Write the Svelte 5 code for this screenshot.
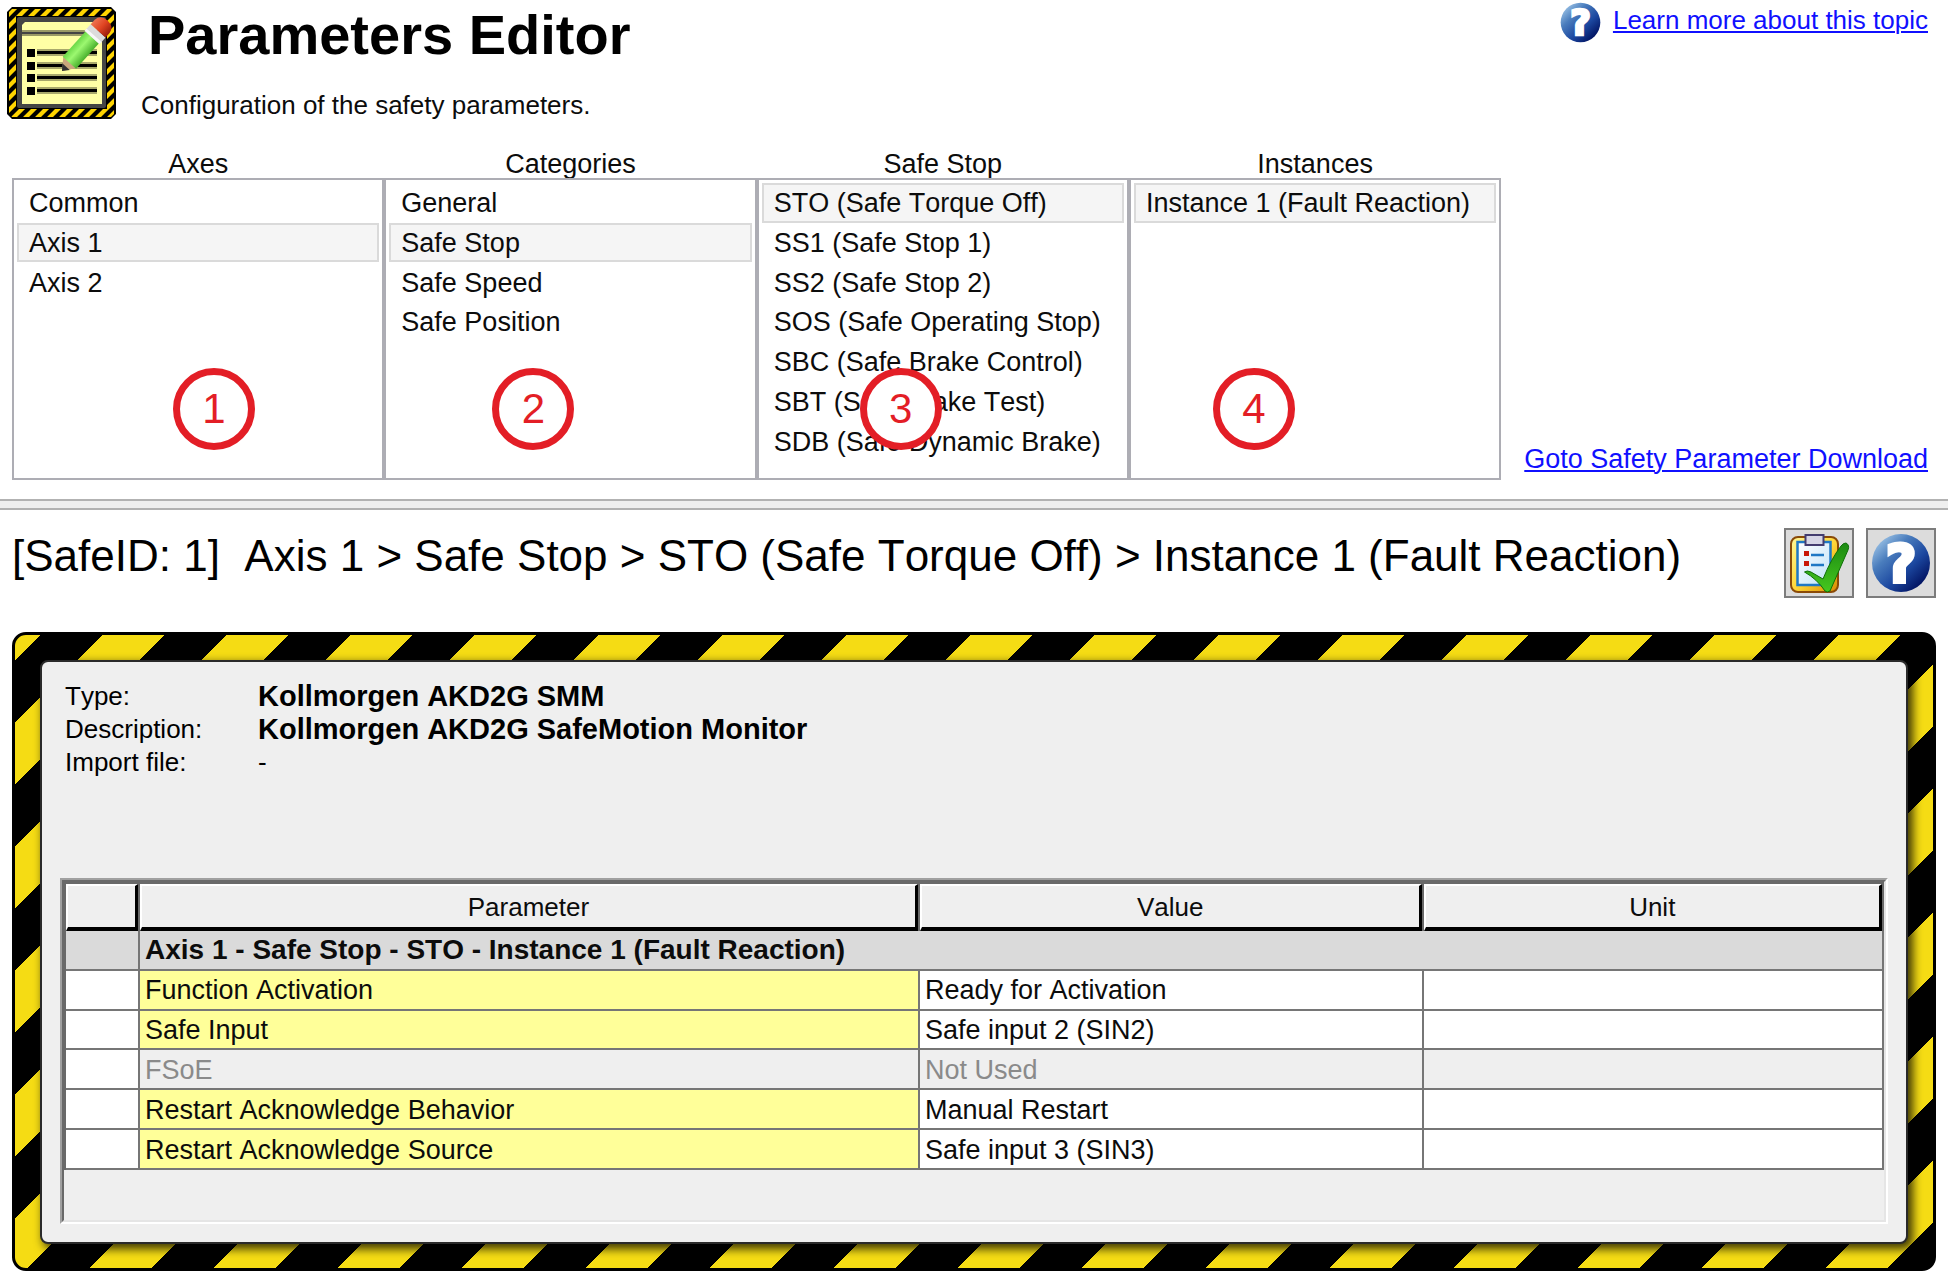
<script lang="ts">
	interface PickerColumn {
		title: string;
		items: string[];
		selected: number;
		marker: number;
	}

	let columns: PickerColumn[] = [
		{ title: 'Axes', items: ['Common', 'Axis 1', 'Axis 2'], selected: 1, marker: 159 },
		{
			title: 'Categories',
			items: ['General', 'Safe Stop', 'Safe Speed', 'Safe Position'],
			selected: 1,
			marker: 106
		},
		{
			title: 'Safe Stop',
			items: [
				'STO (Safe Torque Off)',
				'SS1 (Safe Stop 1)',
				'SS2 (Safe Stop 2)',
				'SOS (Safe Operating Stop)',
				'SBC (Safe Brake Control)',
				'SBT (Safe Brake Test)',
				'SDB (Safe Dynamic Brake)'
			],
			selected: 0,
			marker: 101
		},
		{ title: 'Instances', items: ['Instance 1 (Fault Reaction)'], selected: 0, marker: 82 }
	];

	const parameters = [
		{ name: 'Function Activation', value: 'Ready for Activation', unit: '', disabled: false },
		{ name: 'Safe Input', value: 'Safe input 2 (SIN2)', unit: '', disabled: false },
		{ name: 'FSoE', value: 'Not Used', unit: '', disabled: true },
		{ name: 'Restart Acknowledge Behavior', value: 'Manual Restart', unit: '', disabled: false },
		{ name: 'Restart Acknowledge Source', value: 'Safe input 3 (SIN3)', unit: '', disabled: false }
	];

	const bulletRows = [42, 55, 67, 80];

	function select(column: number, item: number) {
		columns[column].selected = item;
	}
</script>

{#snippet helpIcon(id: string)}
	<svg viewBox="0 0 60 60" aria-hidden="true">
		<defs>
			<linearGradient {id} x1="0.1" y1="0.1" x2="0.85" y2="0.9">
				<stop offset="0" stop-color="#9cc3e6" />
				<stop offset="0.3" stop-color="#4a7dbd" />
				<stop offset="0.65" stop-color="#1c48a0" />
				<stop offset="1" stop-color="#00105e" />
			</linearGradient>
		</defs>
		<circle cx="30" cy="30" r="29" fill="url(#{id})" />
		<text class="question" x="30" y="49" text-anchor="middle">?</text>
	</svg>
{/snippet}

<div class="page">
	<header>
		<svg class="logo" viewBox="0 0 109 112" aria-hidden="true">
			<defs>
				<pattern id="tape" width="12" height="12" patternUnits="userSpaceOnUse">
					<rect width="12" height="12" fill="#000" />
					<path d="M0 6 L6 0 H12 L0 12 Z M12 6 V12 H6 Z" fill="#ffd400" />
				</pattern>
				<linearGradient id="pencil" x1="0" y1="0" x2="0" y2="1">
					<stop offset="0" stop-color="#6cd848" />
					<stop offset="0.4" stop-color="#9cf870" />
					<stop offset="1" stop-color="#48b02c" />
				</linearGradient>
				<linearGradient id="eraser" x1="0" y1="0" x2="0" y2="1">
					<stop offset="0" stop-color="#ee7350" />
					<stop offset="0.5" stop-color="#e04422" />
					<stop offset="1" stop-color="#991c0c" />
				</linearGradient>
			</defs>
			<path d="M5 0 H104 L109 5 V107 L104 112 H5 L0 107 V5 Z" fill="#000" />
			<path d="M5 2 H104 L107 5 V107 L104 110 H5 L2 107 V5 Z" fill="url(#tape)" />
			<rect x="9" y="9" width="91" height="93" fill="#000" />
			<rect x="10" y="10" width="89" height="91" rx="2" fill="#454545" />
			<path d="M18 15 H95 V97 H15 V18 Z" fill="#ffffa5" />
			<rect x="15" y="23" width="80" height="6" fill="#9a9a66" />
			<rect x="15" y="25" width="80" height="2" fill="#444" />
			{#each bulletRows as y}
				<rect x="20" {y} width="8" height="8" fill="#000" />
				<rect x="30" {y} width="60" height="7" fill="#a8a86c" />
				<rect x="30" y={y + 2} width="60" height="3" fill="#000" />
			{/each}
			<g transform="translate(55 64) rotate(-48)">
				<path d="M0 0 L12 -9 V9 Z" fill="#c9a77c" />
				<path d="M0 0 L6 -5 V5 Z" fill="#333" />
				<rect x="11" y="-9" width="35" height="18" fill="url(#pencil)" />
				<rect x="45" y="-10" width="9" height="20" fill="#dcdcdc" />
				<rect x="45" y="-10" width="3" height="20" fill="#f8f8f8" />
				<path d="M54 -10 H60 Q68 -9 68 0 Q68 9 60 10 H54 Z" fill="url(#eraser)" />
			</g>
		</svg>
		<div class="heading">
			<h1>Parameters Editor</h1>
			<p>Configuration of the safety parameters.</p>
		</div>
		<div class="topic">
			{@render helpIcon('ball-small')}
			<a href="#help">Learn more about this topic</a>
		</div>
	</header>

	<section class="picker">
		<div class="columns">
			{#each columns as column, c}
				<div class="column">
					<h2>{column.title}</h2>
					<div class="box">
						<ul>
							{#each column.items as item, i}
								<li>
									<button
										type="button"
										class:selected={column.selected === i}
										on:click={() => select(c, i)}>{item}</button
									>
								</li>
							{/each}
						</ul>
						<span class="marker" style="left: {column.marker}px">{c + 1}</span>
					</div>
				</div>
			{/each}
		</div>
		<a href="#download">Goto Safety Parameter Download</a>
	</section>

	<div class="splitter"></div>

	<section class="title-row">
		<h2>
			[SafeID: 1]&nbsp; Axis 1 &gt; Safe Stop &gt; STO (Safe Torque Off) &gt; Instance 1 (Fault
			Reaction)
		</h2>
		<div class="tools">
			<button type="button" aria-label="Validate parameters">
				<svg viewBox="0 0 60 60" aria-hidden="true">
					<defs>
						<linearGradient id="board" x1="0" y1="0" x2="1" y2="1">
							<stop offset="0" stop-color="#fff79a" />
							<stop offset="0.5" stop-color="#ffd83a" />
							<stop offset="1" stop-color="#d98a00" />
						</linearGradient>
						<linearGradient id="sheet" x1="0" y1="0" x2="1" y2="1">
							<stop offset="0" stop-color="#ffffff" />
							<stop offset="1" stop-color="#bfe2f8" />
						</linearGradient>
						<linearGradient id="tick" x1="0" y1="0" x2="0" y2="1">
							<stop offset="0" stop-color="#1c8a12" />
							<stop offset="1" stop-color="#46c81e" />
						</linearGradient>
					</defs>
					<rect x="2" y="4" width="47" height="55" rx="7" fill="url(#board)" stroke="#8a4a08" stroke-width="2" />
					<rect x="8.5" y="9" width="33" height="43" fill="url(#sheet)" stroke="#1f78c4" stroke-width="2.5" />
					<rect x="16.5" y="2" width="18" height="10" fill="#d6d6e6" stroke="#433d70" stroke-width="2" />
					<rect x="15" y="18" width="5" height="5" fill="#c81808" />
					<rect x="15" y="28" width="5" height="5" fill="#c81808" />
					<path d="M22 22 H35 M22 32 H35" stroke="#1f78c4" stroke-width="2.5" />
					<path
						d="M15.5 39 Q18 37 22 39 L34 46 Q42 26 52 13 Q54 10 57 10 Q61 12 59 17 L41 58 Q38 60 36 58 Q28 46 15.5 39 Z"
						fill="url(#tick)"
						stroke="#0e7008"
						stroke-width="1"
					/>
				</svg>
			</button>
			<button type="button" aria-label="Help">
				{@render helpIcon('ball-large')}
			</button>
		</div>
	</section>

	<section class="hazard">
		<div class="panel">
			<dl>
				<dt>Type:</dt>
				<dd>Kollmorgen AKD2G SMM</dd>
				<dt>Description:</dt>
				<dd>Kollmorgen AKD2G SafeMotion Monitor</dd>
				<dt>Import file:</dt>
				<dd class="empty">-</dd>
			</dl>

			<div class="grid-outer">
				<div class="grid-inner">
					<table>
						<colgroup>
							<col class="col-mark" />
							<col class="col-name" />
							<col class="col-value" />
							<col />
						</colgroup>
						<thead>
							<tr>
								<th><div class="head"></div></th>
								<th><div class="head">Parameter</div></th>
								<th><div class="head">Value</div></th>
								<th><div class="head">Unit</div></th>
							</tr>
						</thead>
						<tbody>
							<tr class="group">
								<td></td>
								<td colspan="3">Axis 1 - Safe Stop - STO - Instance 1 (Fault Reaction)</td>
							</tr>
							{#each parameters as parameter}
								<tr class:disabled={parameter.disabled}>
									<td></td>
									<td class="name">{parameter.name}</td>
									<td>{parameter.value}</td>
									<td>{parameter.unit}</td>
								</tr>
							{/each}
						</tbody>
					</table>
				</div>
			</div>
		</div>
	</section>
</div>

<style>
	:global(body) {
		background: #fff;
	}

	.page {
		font-family: 'Liberation Sans', Arial, sans-serif;
		font-size: 27px;
		font-kerning: none;
		color: #0c0c0c;
		padding-bottom: 12px;
	}

	h1,
	h2,
	p,
	ul,
	dl,
	dd {
		margin: 0;
		padding: 0;
	}

	svg {
		display: block;
		overflow: visible;
	}

	a {
		color: #1010ff;
		line-height: 32px;
		white-space: nowrap;
		text-decoration-thickness: 2px;
		text-underline-offset: 2px;
	}

	header {
		display: flex;
		align-items: flex-start;
		padding-right: 20px;
	}

	.logo {
		width: 109px;
		height: 112px;
		margin: 7px 25px 0 7px;
	}

	.heading {
		flex: 1;
		padding-top: 7px;
	}

	h1 {
		padding-left: 7px;
		font-size: 56px;
		line-height: 56px;
		color: #000;
	}

	.heading p {
		margin-top: 26px;
		font-size: 26px;
		line-height: 32px;
	}

	.topic {
		display: flex;
		align-items: flex-start;
		gap: 12px;
		padding-top: 2px;
		font-size: 26px;
	}

	.topic a {
		line-height: 36px;
	}

	.topic svg {
		width: 41px;
		height: 41px;
	}

	.question {
		font-family: 'DejaVu Sans', sans-serif;
		font-size: 52px;
		font-weight: bold;
		fill: #fff;
		stroke: #fff;
		stroke-width: 4px;
	}

	.picker {
		display: flex;
		align-items: flex-end;
		gap: 23px;
		padding: 29px 20px 19px 12px;
	}

	.picker > a {
		padding-bottom: 5px;
	}

	.columns {
		display: grid;
		grid-template-columns: repeat(4, 1fr);
		flex: 1;
	}

	.column h2 {
		font-size: 27px;
		font-weight: normal;
		line-height: 28px;
		text-align: center;
	}

	.box {
		position: relative;
		padding: 3px 3px 17px;
		border: 2px solid #adadb4;
	}

	ul {
		display: grid;
		grid-template-rows: repeat(7, 1fr);
		height: 278px;
		list-style: none;
	}

	li {
		display: flex;
	}

	li button {
		flex: 1;
		padding: 2px 10px 0;
		border: 2px solid transparent;
		background: none;
		font: inherit;
		color: inherit;
		text-align: left;
		white-space: nowrap;
	}

	li button.selected {
		border-color: #dadada;
		background: #f5f5f5;
	}

	.marker {
		position: absolute;
		top: 188px;
		box-sizing: border-box;
		width: 82px;
		height: 82px;
		border: 7px solid #e31e26;
		border-radius: 50%;
		background: #fff;
		color: #e31e26;
		font-size: 42px;
		line-height: 68px;
		text-align: center;
	}

	.splitter {
		height: 7px;
		border: solid #b2b2b2;
		border-width: 2px 0;
		background: #efefef;
	}

	.title-row {
		display: flex;
		align-items: flex-start;
		justify-content: space-between;
		padding: 18px 12px 34px;
	}

	.title-row h2 {
		font-size: 44px;
		font-weight: normal;
		line-height: 56px;
		color: #000;
	}

	.tools {
		display: flex;
		gap: 12px;
	}

	.tools button {
		width: 70px;
		height: 70px;
		padding: 3px;
		border: 2px solid #7c7c7c;
		background: #dcdcdc;
	}

	.tools svg {
		width: 60px;
		height: 60px;
	}

	.hazard {
		margin: 0 12px;
		padding: 25px 25px 24px;
		border: 3px solid #000;
		border-radius: 14px;
		background: linear-gradient(
				135deg,
				#f5dc14 25%,
				#000 25%,
				#000 50%,
				#f5dc14 50%,
				#f5dc14 75%,
				#000 75%
			) -37px 0 / 124px 124px;
	}

	.panel {
		padding: 18px;
		border: 2px solid #2a2a2a;
		border-radius: 8px;
		background: #efefef;
		box-shadow: 4px 4px 10px 1px rgba(0, 0, 0, 0.75);
	}

	dl {
		display: grid;
		grid-template-columns: 193px 1fr;
		padding-left: 5px;
		line-height: 33px;
		color: #000;
	}

	dt {
		font-size: 26px;
	}

	dd {
		font-size: 29px;
		font-weight: bold;
	}

	dd.empty {
		font-size: 26px;
		font-weight: normal;
	}

	.grid-outer {
		margin-top: 99px;
		border: 2px solid;
		border-color: #a0a0a0 #fff #fff #a0a0a0;
	}

	.grid-inner {
		padding-bottom: 50px;
		border: 2px solid;
		border-color: #696969 #e5e5e5 #e5e5e5 #696969;
	}

	table {
		width: 100%;
		height: 288px;
		table-layout: fixed;
		border-collapse: separate;
		border-spacing: 0;
		border: solid #696969;
		border-width: 2px 0 0 2px;
	}

	.col-mark {
		width: 74px;
	}

	.col-name {
		width: 42.9%;
	}

	.col-value {
		width: 27.7%;
	}

	th {
		height: 47px;
		padding: 0;
		border-right: 2px solid #696969;
		font-size: 26px;
		font-weight: normal;
	}

	.head {
		height: 41px;
		border: solid;
		border-width: 2px 3px 4px 2px;
		border-color: #fff #000 #000 #fff;
		line-height: 43px;
	}

	td {
		padding: 1px 5px 0;
		border: solid #767676;
		border-width: 0 2px 2px 0;
		background: #fff;
		line-height: 36px;
		white-space: nowrap;
	}

	td.name {
		background: #ffff99;
	}

	.group td {
		background: #dadada;
		font-size: 28px;
		font-weight: bold;
	}

	.disabled td {
		color: #8a8a8a;
	}

	.disabled td:not(:first-child) {
		background: #efefef;
	}
</style>
